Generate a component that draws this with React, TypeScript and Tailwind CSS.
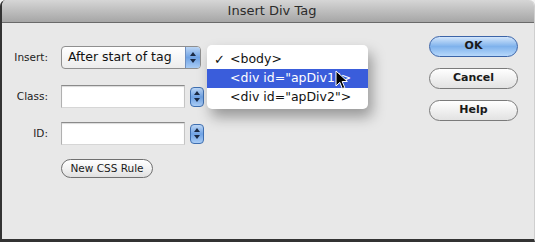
import React from "react"

const font = { fontFamily: '"DejaVu Sans", "Liberation Sans", sans-serif' }

function Stepper({ className = "" }: { className?: string }) {
  return (
    <div
      className={`flex h-[20px] w-[14px] flex-col items-center justify-center gap-[3px] rounded-[4px] border border-[#3f6fb0] bg-gradient-to-b from-[#bcd6f5] via-[#6fa2e4] to-[#a9ccf5] ${className}`}
    >
      <svg width="6" height="4" viewBox="0 0 6 4">
        <path d="M3 0 L6 4 L0 4 Z" fill="#1b2a44" />
      </svg>
      <svg width="6" height="4" viewBox="0 0 6 4">
        <path d="M0 0 L6 0 L3 4 Z" fill="#1b2a44" />
      </svg>
    </div>
  )
}

function TextInput() {
  return (
    <div className="h-[23px] w-[124px] border border-t-[#8a8a8a] border-r-[#c4c4c4] border-b-[#d6d6d6] border-l-[#b0b0b0] bg-white shadow-[inset_0_1px_1px_rgba(0,0,0,0.15)]" />
  )
}

function AquaButton({ label, primary = false }: { label: string; primary?: boolean }) {
  return (
    <button
      className={`flex h-[21px] w-[89px] items-center justify-center rounded-full border text-[11px] font-bold text-[#1a1a1a] ${
        primary
          ? "border-[#3b64a8] bg-gradient-to-b from-[#d3e6fb] via-[#7fb2ec] to-[#b7d8fb]"
          : "border-[#7a7a7a] bg-gradient-to-b from-[#ffffff] via-[#f0f0f0] to-[#e2e2e2]"
      }`}
    >
      {label}
    </button>
  )
}

export default function App() {
  return (
    <div className="relative h-[242px] w-[535px] overflow-hidden bg-[#f4f4f4]" style={font}>
      <div className="flex h-full flex-col overflow-hidden rounded-t-[6px] border-b-[3px] border-l-2 border-r border-b-[#333] border-l-[#333] border-r-[#cfcfcf]">
        <div className="flex h-[23px] shrink-0 items-center justify-center border-b border-[#6a6a6a] bg-gradient-to-b from-[#d6d6d6] to-[#a6a6a6] pl-[8px] text-[13px] text-[#2b2b2b]">
          Insert Div Tag
        </div>
        <div className="flex flex-1 justify-between bg-[#e8e8e8]">
          <div className="flex flex-col pt-[23px]">
            <div className="flex items-center">
              <span className="w-[46px] text-right text-[10.5px] text-[#222]">Insert:</span>
              <div className="ml-[13px] flex h-[23px] w-[140px] items-center overflow-hidden rounded-[4px] border border-[#8f8f8f] bg-gradient-to-b from-white to-[#ececec]">
                <span className="flex-1 pl-[6px] text-[12.5px] text-[#111]">After start of tag</span>
                <div className="flex h-full w-[15px] flex-col items-center justify-center gap-[3px] border-l border-[#6f8fbf] bg-gradient-to-b from-[#bcd6f5] via-[#6fa2e4] to-[#a9ccf5]">
                  <svg width="6" height="4" viewBox="0 0 6 4">
                    <path d="M3 0 L6 4 L0 4 Z" fill="#1b2a44" />
                  </svg>
                  <svg width="6" height="4" viewBox="0 0 6 4">
                    <path d="M0 0 L6 0 L3 4 Z" fill="#1b2a44" />
                  </svg>
                </div>
              </div>
            </div>
            <div className="mt-[16px] flex items-center">
              <span className="w-[46px] text-right text-[10.5px] text-[#222]">Class:</span>
              <div className="ml-[13px]">
                <TextInput />
              </div>
              <Stepper className="ml-[5px]" />
            </div>
            <div className="mt-[14px] flex items-center">
              <span className="w-[46px] text-right text-[10.5px] text-[#222]">ID:</span>
              <div className="ml-[13px]">
                <TextInput />
              </div>
              <Stepper className="ml-[5px]" />
            </div>
            <div className="mt-[14px] pl-[59px]">
              <button className="flex h-[19px] w-[92px] items-center justify-center rounded-full border border-[#707070] bg-gradient-to-b from-white via-[#f2f2f2] to-[#e0e0e0] text-[10.5px] text-[#1a1a1a]">
                New CSS Rule
              </button>
            </div>
          </div>
          <div className="flex flex-col gap-[11px] pr-[16px] pt-[13px]">
            <AquaButton label="OK" primary />
            <AquaButton label="Cancel" />
            <AquaButton label="Help" />
          </div>
        </div>
      </div>

      <div className="absolute left-[207px] top-[45px] w-[161px] rounded-[5px] bg-white pb-[2px] pt-[5px] text-[12.5px] text-[#111] shadow-[4px_8px_14px_rgba(0,0,0,0.35)]">
        <div className="flex h-[19px] items-center">
          <span className="w-[23px] pl-[7px] text-[13px]">✓</span>
          <span>&lt;body&gt;</span>
        </div>
        <div className="flex h-[19px] items-center bg-[#3a5ddb] text-white">
          <span className="w-[23px]" />
          <span>&lt;div id="apDiv1"&gt;</span>
        </div>
        <div className="flex h-[19px] items-center">
          <span className="w-[23px]" />
          <span>&lt;div id="apDiv2"&gt;</span>
        </div>
      </div>

      <svg className="absolute left-[335px] top-[70px]" width="14" height="21" viewBox="0 0 14 21">
        <path
          d="M1 1 L1 16 L4.8 12.3 L7.4 18.6 L9.8 17.6 L7.2 11.5 L12.4 11.5 Z"
          fill="#000"
          stroke="#fff"
          strokeWidth="1"
          strokeLinejoin="round"
        />
      </svg>
    </div>
  )
}
